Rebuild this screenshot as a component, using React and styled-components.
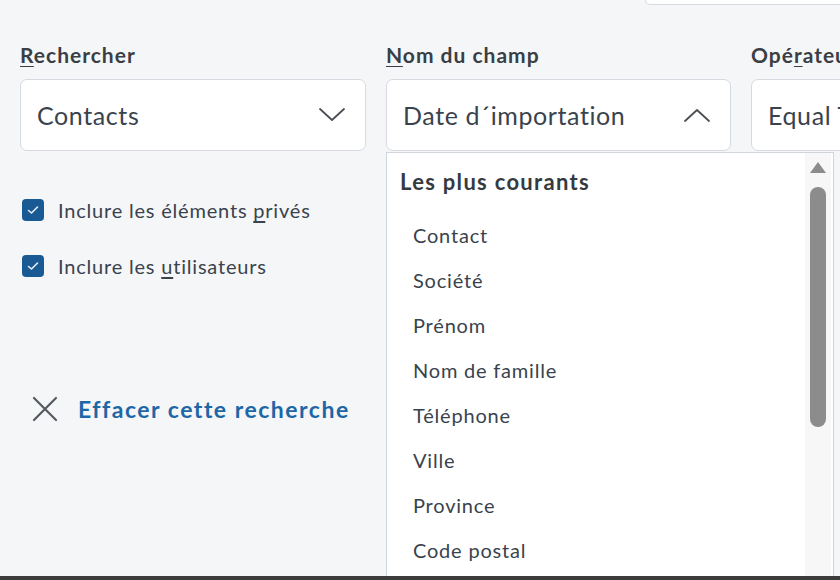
import styled, { createGlobalStyle } from "styled-components";

const GlobalStyle = createGlobalStyle`
  html, body {
    margin: 0;
    padding: 0;
    background: #f5f6f8;
    font-family: Lato, "Open Sans", sans-serif;
    color: #353d46;
  }
`;

const Page = styled.div`
  width: 840px;
  height: 580px;
  display: flex;
  flex-direction: column;
  overflow: hidden;
`;

const Main = styled.div`
  flex: 1;
  position: relative;
  overflow: hidden;
`;

const TopStub = styled.div`
  height: 5px;
  width: 196px;
  margin-left: 645px;
  background: #fff;
  border: 1px solid #d6dae0;
  border-top: none;
  border-radius: 0 0 0 7px;
  box-sizing: border-box;
`;

const FieldsRow = styled.div`
  display: flex;
  gap: 20px;
  padding: 38px 0 0 20px;
`;

const Column = styled.div`
  position: relative;
  flex: 0 0 ${(p) => p.$width}px;
  display: flex;
  flex-direction: column;
`;

const Label = styled.div`
  font-size: 21px;
  font-weight: 700;
  color: #3a3f45;
  line-height: 24px;
  margin-bottom: 12px;
  white-space: nowrap;
  letter-spacing: 1px;

  u {
    text-decoration-thickness: 1px;
    text-underline-offset: 3px;
  }
`;

const SelectBox = styled.div`
  height: 72px;
  box-sizing: border-box;
  background: #fff;
  border: 1px solid #d6dae0;
  border-radius: 7px;
  display: flex;
  align-items: center;
  justify-content: space-between;
  padding: 0 20px 0 16px;
  font-size: 25px;
  letter-spacing: 0.6px;
  color: #3a434d;
  white-space: nowrap;
  overflow: hidden;
`;

const CheckList = styled.div`
  display: flex;
  flex-direction: column;
  gap: 32px;
  margin-top: 47px;
  padding-left: 2px;
`;

const CheckRow = styled.label`
  display: flex;
  align-items: center;
  gap: 14px;
  font-size: 20px;
  letter-spacing: 0.8px;
  color: #3a434d;
  white-space: nowrap;

  u {
    text-underline-offset: 3px;
  }
`;

const CheckBox = styled.span`
  flex: 0 0 22px;
  height: 22px;
  border-radius: 4px;
  background: #1a5a94;
  display: flex;
  align-items: center;
  justify-content: center;
`;

const ClearLink = styled.a`
  display: flex;
  align-items: center;
  gap: 20px;
  margin-top: 117px;
  padding-left: 12px;
  font-size: 23px;
  letter-spacing: 1.5px;
  font-weight: 700;
  color: #1d67a6;
  white-space: nowrap;
  cursor: pointer;
`;

const Menu = styled.div`
  position: absolute;
  top: 109px;
  left: 0;
  width: 448px;
  height: 440px;
  background: #fff;
  border: 1px solid #d0d5db;
  box-sizing: border-box;
  display: flex;
`;

const MenuList = styled.div`
  flex: 1;
  padding: 15px 0 0 13px;
`;

const GroupTitle = styled.div`
  font-size: 22px;
  letter-spacing: 1.3px;
  font-weight: 700;
  color: #343a40;
  line-height: 28px;
  margin-bottom: 17px;
`;

const Option = styled.div`
  font-size: 20px;
  letter-spacing: 0.8px;
  color: #3a434d;
  height: 45px;
  line-height: 45px;
  padding-left: 13px;
`;

const ScrollTrack = styled.div`
  width: 26px;
  margin-right: 2px;
  background: #f7f7f7;
  display: flex;
  flex-direction: column;
  align-items: center;
  padding-top: 9px;
`;

const ScrollArrow = styled.div`
  width: 0;
  height: 0;
  border-left: 8px solid transparent;
  border-right: 8px solid transparent;
  border-bottom: 11px solid #8c8c8c;
`;

const ScrollThumb = styled.div`
  width: 16px;
  height: 240px;
  margin-top: 14px;
  border-radius: 8px;
  background: #8c8c8c;
`;

const BottomEdge = styled.div`
  height: 4px;
  background: #3c3c3c;
`;

const Chevron = ({ up }) => (
  <svg width="26" height="14" viewBox="0 0 26 14" fill="none">
    <polyline
      points={up ? "1,13 13,2 25,13" : "1,1 13,12 25,1"}
      stroke="#4a4f55"
      strokeWidth="1.8"
      strokeLinecap="round"
      strokeLinejoin="round"
    />
  </svg>
);

const Check = () => (
  <svg width="12" height="10" viewBox="0 0 12 10" fill="none">
    <polyline
      points="1.5,5.5 4.5,8 10.5,2"
      stroke="#e8eef5"
      strokeWidth="1.6"
      strokeLinecap="round"
      strokeLinejoin="round"
    />
  </svg>
);

const CloseIcon = () => (
  <svg width="26" height="26" viewBox="0 0 26 26" fill="none">
    <path d="M2 2 L24 24 M24 2 L2 24" stroke="#555a60" strokeWidth="2.2" strokeLinecap="round" />
  </svg>
);

const options = [
  "Contact",
  "Société",
  "Prénom",
  "Nom de famille",
  "Téléphone",
  "Ville",
  "Province",
  "Code postal",
];

export default function App() {
  return (
    <>
      <GlobalStyle />
      <Page>
        <Main>
          <TopStub />
          <FieldsRow>
            <Column $width={346}>
              <Label>
                <u>R</u>echercher
              </Label>
              <SelectBox>
                Contacts
                <Chevron />
              </SelectBox>
              <CheckList>
                <CheckRow>
                  <CheckBox>
                    <Check />
                  </CheckBox>
                  <span>
                    Inclure les éléments <u>p</u>rivés
                  </span>
                </CheckRow>
                <CheckRow>
                  <CheckBox>
                    <Check />
                  </CheckBox>
                  <span>
                    Inclure les <u>u</u>tilisateurs
                  </span>
                </CheckRow>
              </CheckList>
              <ClearLink>
                <CloseIcon />
                Effacer cette recherche
              </ClearLink>
            </Column>
            <Column $width={345}>
              <Label>
                <u>N</u>om du champ
              </Label>
              <SelectBox>
                Date d´importation
                <Chevron up />
              </SelectBox>
              <Menu>
                <MenuList>
                  <GroupTitle>Les plus courants</GroupTitle>
                  {options.map((o) => (
                    <Option key={o}>{o}</Option>
                  ))}
                </MenuList>
                <ScrollTrack>
                  <ScrollArrow />
                  <ScrollThumb />
                </ScrollTrack>
              </Menu>
            </Column>
            <Column $width={200}>
              <Label>
                Opé<u>r</u>ateur
              </Label>
              <SelectBox>Equal To</SelectBox>
            </Column>
          </FieldsRow>
        </Main>
        <BottomEdge />
      </Page>
    </>
  );
}
